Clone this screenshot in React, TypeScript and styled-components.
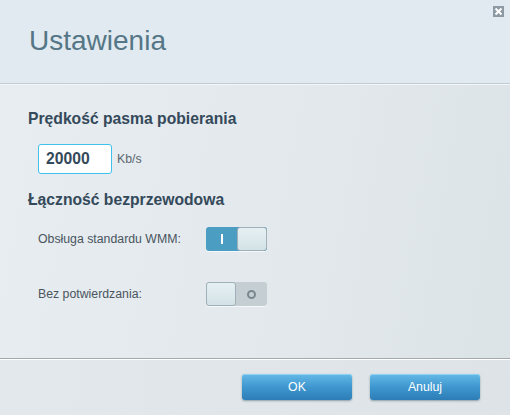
import React from "react";
import styled, { createGlobalStyle } from "styled-components";

const Global = createGlobalStyle`
  html, body {
    margin: 0;
    padding: 0;
    background: #e4eaee;
  }
  body {
    font-family: "Liberation Sans", Arial, sans-serif;
  }
`;

// Frame
const Dialog = styled.div`
  width: 510px;
  height: 415px;
  display: flex;
  flex-direction: column;
  overflow: hidden;
  background: linear-gradient(100deg, #e7edf0 0%, #e2e8ec 60%, #dce3e7 100%);
`;
const Header = styled.div`
  height: 84px;
  flex: none;
  position: relative;
  box-sizing: border-box;
  padding: 25px 0 0 29px;
  background: #e0eaf0;
  border-bottom: 1px solid #c3ccd2;
`;
const Title = styled.h1`
  margin: 0;
  font-weight: normal;
  font-size: 28px;
  line-height: 31px;
  color: #557686;
`;
const Close = styled.button`
  position: absolute;
  top: 6px;
  right: 6px;
  width: 11px;
  height: 11px;
  padding: 0;
  border: none;
  background: #8d9aa3;
  display: flex;
  align-items: center;
  justify-content: center;
`;
const Body = styled.div`
  flex: 1;
  padding: 26px 0 0 28px;
  box-shadow: inset 0 1px 0 #f4f7f9;
`;
const Heading = styled.h2`
  margin: 0;
  font-size: 15.7px;
  line-height: 18px;
  font-weight: bold;
  color: #34495a;
`;
const InputRow = styled.div`
  display: flex;
  align-items: center;
  gap: 5px;
  margin: 16px 0 17px 10px;
`;
const Field = styled.input`
  width: 74px;
  height: 30px;
  box-sizing: border-box;
  border: 1px solid #3fc1ee;
  border-radius: 3px;
  background: #fff;
  padding: 0 0 0 7px;
  font-family: "Liberation Sans", Arial, sans-serif;
  font-size: 15.7px;
  font-weight: bold;
  color: #34495a;
  outline: none;
`;
const Unit = styled.span`
  font-size: 12.3px;
  color: #5a6670;
`;
const Rows = styled.div`
  display: grid;
  grid-template-columns: 168px auto;
  row-gap: 31px;
  align-items: center;
  margin: 18px 0 0 10px;
`;
const Label = styled.span`
  font-size: 12.3px;
  color: #4a555e;
`;
const Toggle = styled.div<{ $on: boolean }>`
  width: 61px;
  height: 24px;
  box-sizing: border-box;
  display: flex;
  flex-direction: ${(p) => (p.$on ? "row" : "row-reverse")};
  border-radius: 3px;
  overflow: hidden;
  background: ${(p) => (p.$on ? "#4c9dc2" : "#c5ced3")};
  box-shadow: 0 1px 0 #f4f8fa;
`;
const Side = styled.div`
  flex: 1;
  display: flex;
  align-items: center;
  justify-content: center;
`;
const OnMark = styled.span`
  width: 2px;
  height: 10px;
  background: #fff;
`;
const OffMark = styled.span`
  width: 5px;
  height: 5px;
  border: 2px solid #7b878e;
  border-radius: 50%;
`;
const Knob = styled.div`
  width: 30px;
  box-sizing: border-box;
  border: 1px solid #9fb0b8;
  border-radius: 3px;
  background: linear-gradient(#e6f0f3, #d3e2e7);
`;
const Footer = styled.div`
  height: 57px;
  flex: none;
  box-sizing: border-box;
  border-top: 1px solid #a1aaaf;
  box-shadow: inset 0 1px 0 #ffffff;
  background: linear-gradient(100deg, #e2e8eb 0%, #dde3e6 100%);
  display: flex;
  justify-content: flex-end;
  align-items: flex-start;
  gap: 18px;
  padding: 15px 30px 0 0;
`;
const Button = styled.button`
  width: 110px;
  height: 26px;
  border: none;
  border-radius: 3px;
  background: linear-gradient(#64b9e6 0%, #3f97cf 50%, #2c7db6 100%);
  box-shadow: 0 1px 2px rgba(40, 70, 90, 0.45), inset 0 1px 0 #8fd3f5;
  color: #fff;
  font-family: "Liberation Sans", Arial, sans-serif;
  font-size: 12.3px;
  padding: 0;
`;

const Switch = ({ on }: { on: boolean }) => (
  <Toggle $on={on}>
    <Side>{on ? <OnMark /> : <OffMark />}</Side>
    <Knob />
  </Toggle>
);

const App = () => {
  return (
    <>
      <Global />
      <Dialog>
        <Header>
          <Title>Ustawienia</Title>
          <Close aria-label="Zamknij">
            <svg width="9" height="9" viewBox="0 0 9 9">
              <path d="M1.5 1.5 L7.5 7.5 M7.5 1.5 L1.5 7.5" stroke="#fff" strokeWidth="2" />
            </svg>
          </Close>
        </Header>
        <Body>
          <Heading>Prędkość pasma pobierania</Heading>
          <InputRow>
            <Field defaultValue="20000" />
            <Unit>Kb/s</Unit>
          </InputRow>
          <Heading>Łączność bezprzewodowa</Heading>
          <Rows>
            <Label>Obsługa standardu WMM:</Label>
            <Switch on={true} />
            <Label>Bez potwierdzania:</Label>
            <Switch on={false} />
          </Rows>
        </Body>
        <Footer>
          <Button>OK</Button>
          <Button>Anuluj</Button>
        </Footer>
      </Dialog>
    </>
  );
};

export default App;
